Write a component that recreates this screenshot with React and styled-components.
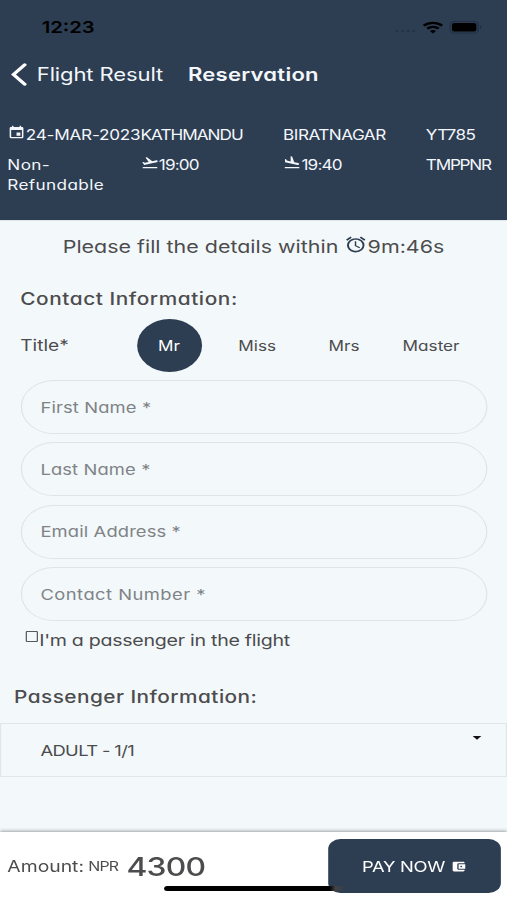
import React, { useState } from "react";
import styled, { createGlobalStyle } from "styled-components";
import {
  MdEvent,
  MdFlightTakeoff,
  MdFlightLand,
  MdAlarm,
  MdAccountBalanceWallet,
  MdArrowDropDown,
} from "react-icons/md";

const titles = ["Mr", "Miss", "Mrs", "Master"];

const fields = [
  { label: "First Name *" },
  { label: "Last Name *" },
  { label: "Email Address *" },
  { label: "Contact Number *", tracking: "0.38px" },
];

function StatusBar() {
  return (
    <Status>
      <Clock>12:23</Clock>
      <StatusIcons>
        <svg width="18" height="4" viewBox="0 0 18 4" fill="#223042">
          <circle cx="2" cy="2" r="1.1" />
          <circle cx="6.6" cy="2" r="1.1" />
          <circle cx="11.2" cy="2" r="1.1" />
          <circle cx="15.8" cy="2" r="1.1" />
        </svg>
        <svg width="17" height="13" viewBox="0 0 17 13" fill="none" stroke="#000" strokeWidth="2.3">
          <path d="M1 4.7C5.2.8 11.8.8 16 4.7" />
          <path d="M3.8 7.7C6.5 5.2 10.5 5.2 13.2 7.7" />
          <path d="M8.5 12.6L6 10C7.4 8.7 9.6 8.7 11 10Z" fill="#000" stroke="none" />
        </svg>
        <svg width="27" height="13" viewBox="0 0 27 13">
          <rect x=".5" y=".5" width="23" height="11.6" rx="3.4" fill="none" stroke="#202f41" />
          <rect x="2" y="2" width="20" height="8.6" rx="2" fill="#000" />
          <path d="M25 4.4c1.6.6 1.6 3.2 0 3.8z" fill="#202f41" />
        </svg>
      </StatusIcons>
    </Status>
  );
}

function App() {
  const [title, setTitle] = useState("Mr");

  return (
    <Screen>
      <GlobalStyle />
      <Header>
        <StatusBar />
        <NavBar>
          <BackButton>
            <svg width="13" height="23" viewBox="0 0 13 23" fill="none" stroke="#fff" strokeWidth="3" strokeLinecap="round">
              <path d="M11.2 1.8L2 11.5L11.2 21.2" />
            </svg>
            <span>Flight Result</span>
          </BackButton>
          <PageTitle>Reservation</PageTitle>
        </NavBar>
        <FlightInfo>
          <InfoCell $tracking="-0.18px">
            <MdEvent size={15} />
            24-MAR-2023
          </InfoCell>
          <InfoCell $tracking="-0.8px">KATHMANDU</InfoCell>
          <InfoCell>BIRATNAGAR</InfoCell>
          <InfoCell>YT785</InfoCell>
          <InfoCell $tracking="0.3px">
            Non-
            <br />
            Refundable
          </InfoCell>
          <InfoCell $tracking="-0.7px">
            <MdFlightTakeoff size={15} />
            19:00
          </InfoCell>
          <InfoCell $tracking="-0.7px">
            <MdFlightLand size={15} />
            19:40
          </InfoCell>
          <InfoCell $tracking="-1px">TMPPNR</InfoCell>
        </FlightInfo>
      </Header>

      <Timer>
        Please fill the details within <MdAlarm size={19} />
        9m:46s
      </Timer>

      <ContactForm>
        <SectionTitle>Contact Information:</SectionTitle>
        <TitleRow>
          <TitleLabel>Title*</TitleLabel>
          {titles.map((name) => (
            <TitleOption
              key={name}
              type="button"
              $active={title === name}
              onClick={() => setTitle(name)}
            >
              {name}
            </TitleOption>
          ))}
        </TitleRow>
        {fields.map((field) => (
          <Field key={field.label} placeholder={field.label} $tracking={field.tracking} />
        ))}
        <CheckRow>
          <CheckBox />
          I'm a passenger in the flight
        </CheckRow>
      </ContactForm>

      <PassengerTitle>Passenger Information:</PassengerTitle>
      <PassengerPanel>
        <span>ADULT - 1/1</span>
        <MdArrowDropDown size={17} />
      </PassengerPanel>

      <Footer>
        <Amount>
          <AmountLabel>Amount:</AmountLabel>
          <Currency>NPR</Currency>
          <Price>4300</Price>
        </Amount>
        <PayButton>
          PAY NOW
          <MdAccountBalanceWallet size={13} />
        </PayButton>
        <HomeIndicator />
      </Footer>
    </Screen>
  );
}

const GlobalStyle = createGlobalStyle`
  * {
    box-sizing: border-box;
  }

  body {
    margin: 0;
    overflow: hidden;
    background: #f3f8fb;
  }
`;

/* 414pt wide phone layout, widened to fill the 507px window */
const Screen = styled.div`
  width: 414px;
  height: 900px;
  transform: scaleX(1.22464);
  transform-origin: 0 0;
  display: flex;
  flex-direction: column;
  background: #f3f8fb;
  color: #4c4c4e;
  font-family: Inter, "Open Sans", sans-serif;
  font-feature-settings: "cv11", "ss03";
`;

const Header = styled.header`
  height: 220px;
  flex-shrink: 0;
  background: #2d3d52;
  color: #f3f7fc;
  box-shadow: 0 0 1px rgba(45, 61, 82, 0.5);
`;

const Status = styled.div`
  height: 54px;
  padding: 0 20px 0 34px;
  display: flex;
  align-items: center;
  justify-content: space-between;
  color: #000;
`;

const Clock = styled.span`
  font-size: 16.5px;
  font-weight: 600;
`;

const StatusIcons = styled.div`
  display: flex;
  align-items: center;
  gap: 5px;

  svg:first-child {
    margin-top: 8px;
  }
`;

const NavBar = styled.nav`
  height: 41px;
  padding-left: 9px;
  display: flex;
  align-items: center;
`;

const BackButton = styled.button`
  width: 144.5px;
  padding: 0;
  border: 0;
  background: none;
  color: inherit;
  font: 400 18px Inter, sans-serif;
  letter-spacing: -0.1px;
  display: flex;
  align-items: center;
  gap: 8px;
  white-space: nowrap;
`;

const PageTitle = styled.h1`
  margin: 0;
  font-size: 18px;
  font-weight: 600;
  letter-spacing: 0.2px;
`;

const FlightInfo = styled.div`
  padding: 30px 0 0 6px;
  display: grid;
  grid-template-columns: 108.7px 116.5px 116.5px 60px;
  row-gap: 10px;
`;

const InfoCell = styled.div`
  font-size: 14px;
  line-height: 20px;
  letter-spacing: ${(props) => props.$tracking || "-0.42px"};
  white-space: nowrap;

  svg {
    vertical-align: 0;
  }
`;

const Timer = styled.p`
  margin: 0;
  height: 53px;
  line-height: 53px;
  text-align: center;
  font-size: 17.5px;

  svg {
    vertical-align: -1px;
    color: #2d3d52;
  }
`;

const ContactForm = styled.form`
  padding: 12px 16px 0 16.5px;
  display: flex;
  flex-direction: column;
`;

const SectionTitle = styled.h2`
  margin: 0;
  font-size: 17px;
  line-height: 28px;
  font-weight: 500;
  letter-spacing: 0.46px;
`;

const TitleRow = styled.div`
  height: 53px;
  margin: 6px 0 8px;
  display: grid;
  grid-template-columns: 85px 72px 71px 71px 72px;
  align-items: center;
`;

const TitleLabel = styled.span`
  font-size: 15.6px;
`;

const TitleOption = styled.button`
  width: 53px;
  height: 53px;
  padding: 0;
  margin-left: 10px;
  border: 0;
  border-radius: 50%;
  background: ${(props) => (props.$active ? "#2d3d52" : "none")};
  color: ${(props) => (props.$active ? "#fff" : "#4c4c4e")};
  font: inherit;
  font-feature-settings: inherit;
  font-size: 14px;
`;

const Field = styled.input`
  height: 54px;
  margin-bottom: 8.4px;
  padding: 0 15.5px;
  border: 1px solid #e0e4e7;
  border-radius: 27px;
  background: transparent;
  font: inherit;
  font-feature-settings: inherit;
  font-size: 15px;
  letter-spacing: ${(props) => props.$tracking || "0.1px"};

  &::placeholder {
    color: #808386;
    opacity: 1;
  }
`;

const CheckRow = styled.label`
  margin-left: 4.5px;
  height: 22px;
  line-height: 20px;
  font-size: 16px;
  letter-spacing: -0.23px;
  display: flex;
`;

const CheckBox = styled.span`
  width: 10px;
  height: 11px;
  margin: 1px 1px 0 0;
  border: 1px solid #55585c;
  border-radius: 1px;
`;

const PassengerTitle = styled(SectionTitle)`
  margin: 31px 0 12px 11.5px;
  letter-spacing: 0.36px;
`;

const PassengerPanel = styled.section`
  height: 54px;
  padding: 2px 15.5px 0 32px;
  display: flex;
  align-items: center;
  justify-content: space-between;
  border: 1px solid #e2e6e9;
  font-size: 15px;
  letter-spacing: -0.5px;

  svg {
    color: #111;
    margin-bottom: 27px;
  }
`;

const Footer = styled.footer`
  position: relative;
  height: 68px;
  margin-top: auto;
  padding: 7px 5px 7px 6px;
  display: flex;
  align-items: center;
  justify-content: space-between;
  background: #fff;
  box-shadow: 0 -1px 3px rgba(0, 0, 0, 0.35);
`;

const Amount = styled.div`
  display: flex;
  align-items: center;
`;

const AmountLabel = styled.span`
  font-size: 15.8px;
`;

const Currency = styled.span`
  margin: 0 7px 0 3.5px;
  font-size: 13px;
  letter-spacing: -0.75px;
`;

const Price = styled.strong`
  font-size: 26px;
  font-weight: 500;
  letter-spacing: -0.7px;
`;

const PayButton = styled.button`
  width: 141px;
  height: 54px;
  border: 0;
  border-radius: 10px;
  background: #2d3d52;
  color: #fff;
  font: inherit;
  font-size: 15px;
  letter-spacing: -0.25px;
  display: flex;
  align-items: center;
  justify-content: center;
  gap: 5px;
`;

const HomeIndicator = styled.div`
  position: absolute;
  left: 134px;
  bottom: 9px;
  width: 148px;
  height: 5px;
  border-radius: 3px;
  background: linear-gradient(to right, #000 135px, #444 140px, #2d3d52);
`;

export default App;
